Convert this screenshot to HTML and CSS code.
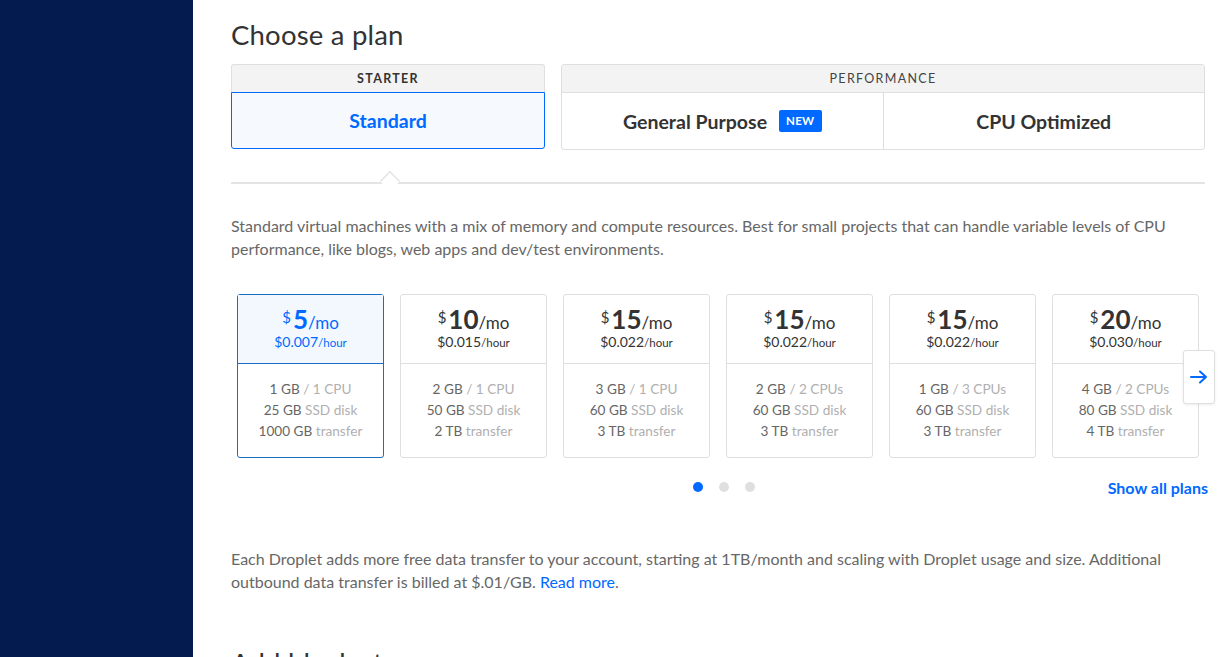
FILE: index.html
```html
<!DOCTYPE html>
<html>
<head>
<meta charset="utf-8">
<link rel="stylesheet" href="styles.css">
</head>
<body>
<div class="app">
  <aside class="sidebar"></aside>
  <main class="main">
    <h1 class="title">Choose a plan</h1>
    <div class="tabs">
      <div class="group group-starter">
        <div class="group-head">STARTER</div>
        <div class="group-body">
          <div class="tab tab-active">Standard</div>
        </div>
      </div>
      <div class="group group-perf">
        <div class="group-head">PERFORMANCE</div>
        <div class="group-body">
          <div class="tab">General Purpose <span class="badge">NEW</span></div>
          <div class="tab tab-sep">CPU Optimized</div>
        </div>
      </div>
    </div>
    <div class="rule"><span class="notch"></span></div>
    <p class="desc">Standard virtual machines with a mix of memory and compute resources. Best for small projects that can handle variable levels of CPU performance, like blogs, web apps and dev/test environments.</p>

    <div class="carousel">
      <div class="cards">
        <div class="card card-active">
          <div class="price"><div class="mo"><span class="cur">$</span><span class="amt">5</span>/mo</div><div class="hr">$0.007<span class="hu">/hour</span></div></div>
          <div class="specs"><div><b>1 GB</b> / 1 CPU</div><div><b>25 GB</b> SSD disk</div><div><b>1000 GB</b> transfer</div></div>
        </div>
        <div class="card">
          <div class="price"><div class="mo"><span class="cur">$</span><span class="amt">10</span>/mo</div><div class="hr">$0.015<span class="hu">/hour</span></div></div>
          <div class="specs"><div><b>2 GB</b> / 1 CPU</div><div><b>50 GB</b> SSD disk</div><div><b>2 TB</b> transfer</div></div>
        </div>
        <div class="card">
          <div class="price"><div class="mo"><span class="cur">$</span><span class="amt">15</span>/mo</div><div class="hr">$0.022<span class="hu">/hour</span></div></div>
          <div class="specs"><div><b>3 GB</b> / 1 CPU</div><div><b>60 GB</b> SSD disk</div><div><b>3 TB</b> transfer</div></div>
        </div>
        <div class="card">
          <div class="price"><div class="mo"><span class="cur">$</span><span class="amt">15</span>/mo</div><div class="hr">$0.022<span class="hu">/hour</span></div></div>
          <div class="specs"><div><b>2 GB</b> / 2 CPUs</div><div><b>60 GB</b> SSD disk</div><div><b>3 TB</b> transfer</div></div>
        </div>
        <div class="card">
          <div class="price"><div class="mo"><span class="cur">$</span><span class="amt">15</span>/mo</div><div class="hr">$0.022<span class="hu">/hour</span></div></div>
          <div class="specs"><div><b>1 GB</b> / 3 CPUs</div><div><b>60 GB</b> SSD disk</div><div><b>3 TB</b> transfer</div></div>
        </div>
        <div class="card">
          <div class="price"><div class="mo"><span class="cur">$</span><span class="amt">20</span>/mo</div><div class="hr">$0.030<span class="hu">/hour</span></div></div>
          <div class="specs"><div><b>4 GB</b> / 2 CPUs</div><div><b>80 GB</b> SSD disk</div><div><b>4 TB</b> transfer</div></div>
        </div>
      </div>
      <button class="next" aria-label="Next">
        <svg width="18" height="14" viewBox="0 0 18 14"><path d="M1 7H16M10 1.5L16 7L10 12.5" fill="none" stroke="#0069ff" stroke-width="2" stroke-linecap="round" stroke-linejoin="round"/></svg>
      </button>
    </div>

    <div class="pager">
      <div class="dots"><span class="dot dot-on"></span><span class="dot"></span><span class="dot"></span></div>
      <a class="showall">Show all plans</a>
    </div>

    <p class="desc desc2">Each Droplet adds more free data transfer to your account, starting at 1TB/month and scaling with Droplet usage and size. Additional outbound data transfer is billed at $.01/GB. <a class="link">Read more</a>.</p>

    <h2 class="title title2">Add block storage</h2>
  </main>
</div>
</body>
</html>
```

FILE: styles.css
```css
* { box-sizing: border-box; }
html, body { margin: 0; padding: 0; height: 100%; overflow: hidden; }
body { font-family: "Lato", "Liberation Sans", sans-serif; color: #333; background: #fff; }
.app { display: flex; height: 657px; }
.sidebar { width: 193px; flex: none; background: #031b4e; }
.main { flex: 1; padding: 0 22px 0 38px; min-width: 0; }

.title { margin: 18px 0 0; font-size: 27.5px; font-weight: 400; line-height: 34px; color: #333; letter-spacing: 0.2px; }

.tabs { display: flex; gap: 16px; margin-top: 12px; width: 974px; }
.group { border: 1px solid #dfdfdf; border-radius: 3px; background: #fff; overflow: hidden; display: flex; flex-direction: column; }
.group-starter { width: 314px; border: none; overflow: visible; }
.group-starter .group-head { border: 1px solid #dfdfdf; border-bottom: none; border-radius: 3px 3px 0 0; }
.group-perf { flex: 1; }
.group-head { height: 28px; background: #f3f3f3; border-bottom: 1px solid #dfdfdf; font-size: 12.5px; letter-spacing: 1.3px; line-height: 28px; text-align: center; color: #444; }
.group-starter .group-head { font-weight: 700; color: #333; }
.group-body { display: flex; height: 56px; }
.tab { flex: 1; display: flex; align-items: center; justify-content: center; font-size: 19.5px; font-weight: 700; color: #333; gap: 12px; }
.tab-sep { border-left: 1px solid #dfdfdf; }
.tab-active { color: #0069ff; background: #f6f9fe; border: 1px solid #0069ff; border-radius: 0 0 3px 3px; height: 57px; flex: none; width: 314px; }
.badge { background: #0069ff; color: #fff; font-size: 11.5px; font-weight: 700; padding: 0 7px; line-height: 22px; border-radius: 2px; letter-spacing: 0.3px; }

.rule { position: relative; height: 2px; background: #e4e4e4; margin-top: 32px; width: 974px; }
.notch { position: absolute; left: 149px; top: -11px; width: 20px; height: 20px; background: #fff; border-left: 2px solid #e4e4e4; border-top: 2px solid #e4e4e4; transform: rotate(45deg) scale(0.72, 0.72); transform-origin: center; }

.desc { margin: 30px 0 0; font-size: 16px; line-height: 23px; color: #676767; width: 960px; }
.desc2 { margin-top: 50px; width: 940px; }
.link { color: #0069ff; }

.carousel { position: relative; margin-top: 34px; padding-left: 6px; }
.cards { display: flex; gap: 16px; }
.card { width: 147px; height: 164px; border: 1px solid #dfdfdf; border-radius: 3px; display: flex; flex-direction: column; text-align: center; }
.price { height: 69px; border-bottom: 1px solid #dfdfdf; padding-top: 11px; }
.mo { font-size: 17px; color: #333; line-height: 22px; height: 25px; }
.cur { font-size: 15px; vertical-align: 6px; margin-right: 2px; }
.amt { font-size: 26px; font-weight: 700; }
.hr { font-size: 14px; line-height: 16px; color: #333; margin-top: 3px; }
.hu { font-size: 11.5px; }
.specs { padding-top: 15px; font-size: 13.6px; line-height: 21px; color: #b0b0b0; }
.specs b { font-weight: 400; color: #666; }
.card-active { border-color: #1a6ec2; }
.card-active .price { background: #f3f8ff; border-bottom-color: #1a6ec2; color: #0069ff; }
.card-active .mo, .card-active .hr { color: #0069ff; }

.next { position: absolute; left: 952px; top: 56px; width: 32px; height: 54px; background: #fff; border: 1px solid #e0e0e0; border-radius: 3px; box-shadow: 0 1px 3px rgba(0,0,0,0.08); display: flex; align-items: center; justify-content: center; padding: 0; }

.pager { position: relative; display: flex; justify-content: flex-end; align-items: center; margin-top: 19px; width: 977px; height: 20px; }
.dots { position: absolute; left: 462px; top: 5px; display: flex; gap: 16px; }
.dot { width: 10px; height: 10px; border-radius: 50%; background: #dfdfdf; }
.dot-on { background: #0069ff; }
.showall { font-size: 16px; font-weight: 700; color: #0069ff; }

.title2 { margin-top: 53px; }
```
